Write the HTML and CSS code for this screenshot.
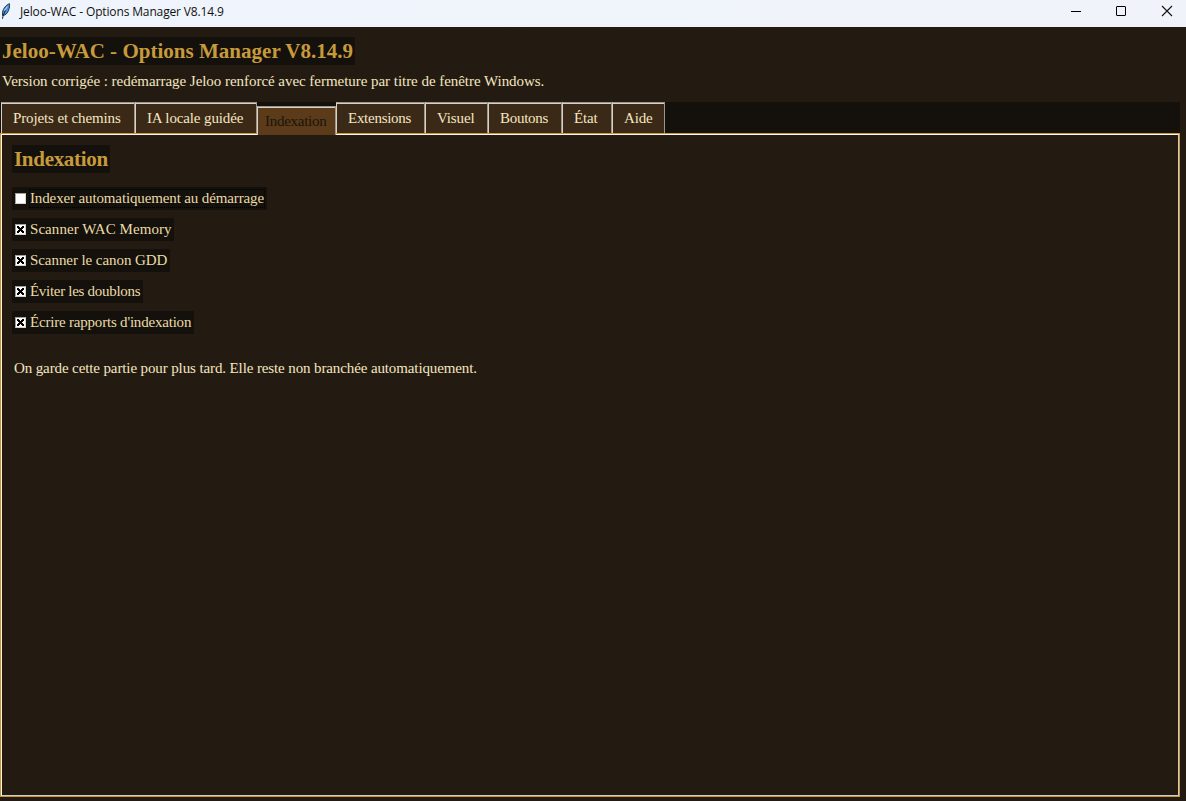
FILE: index.html
```html
<!DOCTYPE html>
<html lang="fr">
<head>
<meta charset="utf-8">
<title>Jeloo-WAC - Options Manager V8.14.9</title>
<link rel="stylesheet" href="styles.css">
</head>
<body>
<div class="window">
  <header class="titlebar">
    <svg class="feather" width="12" height="20" viewBox="0 0 12 20">
      <path d="M9.500 2.700C6.500 3.500 3 7.500 2.500 11.500l0 3L4.800 14c3.500-2 5.200-7 4.700-11.300z" fill="#4a8fd8" stroke="#172838" stroke-width="0.900"/>
      <path d="M2.500 17.800C3 14.500 4 12 5.500 9.500" fill="none" stroke="#101c2a" stroke-width="1"/>
      <path d="M4.300 9.500l3.200-4" stroke="#a8d0f4" stroke-width="1.200"/>
    </svg>
    <span class="caption">Jeloo-WAC - Options Manager V8.14.9</span>
    <div class="controls">
      <svg width="45" height="27" viewBox="0 0 45 27"><path d="M11 11.500h10" stroke="#000"/></svg>
      <svg width="46" height="27" viewBox="0 0 46 27"><rect x="11.500" y="6.500" width="9" height="9" rx="0.500" fill="none" stroke="#000"/></svg>
      <svg width="46" height="27" viewBox="0 0 46 27"><path d="M11 6l10 10M21 6L11 16" stroke="#111" stroke-width="1.100"/></svg>
    </div>
  </header>
  <main class="content">
    <h1 class="heading page-heading">Jeloo-WAC - Options Manager V8.14.9</h1>
    <p class="subtitle">Version corrigée : redémarrage Jeloo renforcé avec fermeture par titre de fenêtre Windows.</p>
    <nav class="tabs">
      <div class="tab tab-projects">Projets et chemins</div>
      <div class="tab tab-ai">IA locale guidée</div>
      <div class="tab tab-index active">Indexation</div>
      <div class="tab tab-ext">Extensions</div>
      <div class="tab tab-visual">Visuel</div>
      <div class="tab tab-buttons">Boutons</div>
      <div class="tab tab-state">État</div>
      <div class="tab tab-help">Aide</div>
    </nav>
    <section class="panel">
      <div class="panel-inner">
        <h2 class="heading panel-heading">Indexation</h2>
        <div class="options">
          <div class="option w-auto"><span class="box"></span><span class="label focused">Indexer automatiquement au démarrage</span></div>
          <div class="option w-memory"><span class="box"><svg class="cross" width="9" height="9" viewBox="0 0 9 9"><path d="M1 1h2v1h1v1h1v-1h1v-1h2v2h-1v1h-1v1h1v1h1v2h-2v-1h-1v-1h-1v1h-1v1h-2v-2h1v-1h1v-1h-1v-1h-1z"/></svg></span><span class="label">Scanner WAC Memory</span></div>
          <div class="option w-canon"><span class="box"><svg class="cross" width="9" height="9" viewBox="0 0 9 9"><path d="M1 1h2v1h1v1h1v-1h1v-1h2v2h-1v1h-1v1h1v1h1v2h-2v-1h-1v-1h-1v1h-1v1h-2v-2h1v-1h1v-1h-1v-1h-1z"/></svg></span><span class="label">Scanner le canon GDD</span></div>
          <div class="option w-dup"><span class="box"><svg class="cross" width="9" height="9" viewBox="0 0 9 9"><path d="M1 1h2v1h1v1h1v-1h1v-1h2v2h-1v1h-1v1h1v1h1v2h-2v-1h-1v-1h-1v1h-1v1h-2v-2h1v-1h1v-1h-1v-1h-1z"/></svg></span><span class="label">Éviter les doublons</span></div>
          <div class="option w-report"><span class="box"><svg class="cross" width="9" height="9" viewBox="0 0 9 9"><path d="M1 1h2v1h1v1h1v-1h1v-1h2v2h-1v1h-1v1h1v1h1v2h-2v-1h-1v-1h-1v1h-1v1h-2v-2h1v-1h1v-1h-1v-1h-1z"/></svg></span><span class="label">Écrire rapports d'indexation</span></div>
        </div>
        <p class="note">On garde cette partie pour plus tard. Elle reste non branchée automatiquement.</p>
      </div>
    </section>
  </main>
</div>
</body>
</html>
```
FILE: styles.css
```css
* { box-sizing: border-box; }
body {
  margin: 0;
  font-family: "Liberation Serif", "Times New Roman", serif;
  font-size: 15px;
  line-height: 21px;
  color: #f4e6c0;
  background: #231b11;
}
.window { width: 1186px; height: 801px; overflow: hidden; display: flex; flex-direction: column; }
.titlebar {
  height: 27px;
  flex: none;
  display: flex;
  background: linear-gradient(90deg, #eff4fc, #f0f3f9);
  color: #111;
  font: 12px/23px "Open Sans", "Noto Sans", sans-serif;
}
.feather { margin: 1px 8px 0 0; flex: none; }
.caption { white-space: nowrap; letter-spacing: -0.14px; }
.controls { display: flex; margin-left: auto; margin-right: -11px; }
.controls svg { display: block; }
.content { padding-top: 10px; flex: 1; }
.heading {
  margin: 0;
  height: 28px;
  padding-left: 2px;
  background: #14100b;
  color: #c79a3b;
  font-size: 21px;
  line-height: 28px;
  font-weight: bold;
  white-space: nowrap;
}
.page-heading { width: 355px; letter-spacing: 0.02px; }
.subtitle { margin: 6px 0 0 2px; height: 21px; white-space: nowrap; letter-spacing: -0.04px; }
.tabs { display: flex; width: 1180px; height: 31px; margin-top: 10px; background: #14100b; letter-spacing: -0.13px; }
.tab {
  height: 31px;
  line-height: 31px;
  padding-left: 11px;
  background: #3a2917;
  border-left: 1px solid #d6d2ca;
  border-right: 1px solid #9c968c;
  border-top: 1px solid #9c968c;
  box-shadow: inset 0 1px #d6d2ca;
  white-space: nowrap;
}
.tab-projects { width: 134px; margin-left: 1px; }
.tab-ai { width: 122px; }
.tab-index { width: 79px; letter-spacing: -0.27px; }
.tab-ext { width: 89px; letter-spacing: -0.27px; }
.tab-visual { width: 63px; }
.tab-buttons { width: 74px; letter-spacing: -0.27px; }
.tab-state { width: 50px; }
.tab-help { width: 53px; }
.active {
  position: relative;
  margin-top: 4px;
  height: 29px;
  line-height: 28px;
  padding-left: 7px;
  background: #5b3b19;
  color: #1a140d;
}
.panel { width: 1180px; height: 664px; border: 1px solid #c8963a; }
.panel-inner {
  height: 662px;
  border: 1px solid #fff8e8;
  border-right-color: #d0ccc3;
  border-bottom-color: #d0ccc3;
  padding: 10px;
}
.panel-heading { width: 98px; letter-spacing: -0.3px; }
.options { display: flex; flex-direction: column; gap: 8px; margin-top: 14px; }
.option { display: flex; align-items: center; height: 23px; padding-left: 3px; background: #14100b; color: #eadba8; }
.box { flex: none; width: 11px; height: 11px; background: #fff; border: 1px solid #a5a19a; border-right-color: #d8d4cc; border-bottom-color: #d8d4cc; }
.cross { display: block; fill: #000; }
.label { height: 19px; line-height: 19px; margin-left: 3px; padding-left: 1px; white-space: nowrap; }
.focused { outline: 1px dotted #000; outline-offset: -1px; padding-right: 1px; }
.w-auto { width: 255px; letter-spacing: -0.13px; }
.w-memory { width: 162px; letter-spacing: 0.06px; }
.w-canon { width: 158px; letter-spacing: -0.07px; }
.w-dup { width: 131px; letter-spacing: -0.29px; }
.w-report { width: 182px; letter-spacing: -0.2px; }
.note { margin: 24px 0 0 2px; white-space: nowrap; letter-spacing: -0.115px; }
```
